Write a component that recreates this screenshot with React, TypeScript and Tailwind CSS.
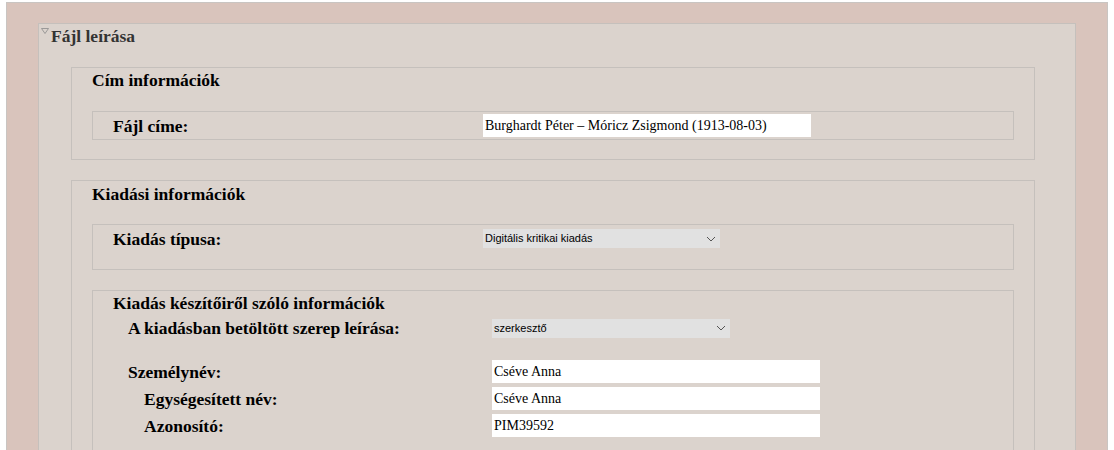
import React from "react";

const serif = "font-['Liberation_Serif',_'Times_New_Roman',_serif]";

function Label({ text, width }: { text: string; width: number }) {
  return (
    <div className="shrink-0 text-[17.5px] font-bold leading-[20px] text-black" style={{ width }}>
      {text}
    </div>
  );
}

function TextInput({ value }: { value: string }) {
  return (
    <input
      readOnly
      value={value}
      className={`${serif} h-[23px] w-[328px] bg-white px-[2px] text-[14px] text-black outline-none`}
    />
  );
}

function Select({ value, width = 238 }: { value: string; width?: number }) {
  return (
    <div
      className="flex h-[19px] items-center justify-between bg-[#e1e1e1] pl-[2px] pr-[4px] font-['Liberation_Sans',_Arial,_sans-serif] text-[11px] text-black"
      style={{ width }}
    >
      <span>{value}</span>
      <svg width="10" height="6" viewBox="0 0 10 6" fill="none" stroke="#555" strokeWidth="1">
        <path d="M1 1l4 4 4-4" />
      </svg>
    </div>
  );
}

export default function App() {
  return (
    <div className={`${serif} min-h-[450px] bg-white pt-[2px] pl-[6px] pr-[6px]`}>
      <div className="h-[448px] overflow-hidden border border-b-0 border-[#c9c5c2] bg-[#d9c4bc] pt-[20px] pl-[31px] pr-[31px]">
        {/* Fájl leírása */}
        <div className="h-[430px] border border-b-0 border-[#c5c0bc] bg-[#dbd3cd] pl-[32px] pr-[40px]">
          <div className="-ml-[32px] flex items-start pt-[3px] pl-[2px]">
            <svg width="8" height="6" viewBox="0 0 8 6" className="mt-[1px]" fill="none" stroke="#8a8a8a" strokeWidth="0.8">
              <path d="M0.5 0.5h7L4 5.5z" />
            </svg>
            <span className="ml-[2px] text-[17.5px] font-bold leading-[18px] text-[#333]">Fájl leírása</span>
          </div>

          {/* Cím információk */}
          <div className="mt-[22px] border border-[#c5c0bc] px-[20px] pb-[19px]">
            <div className="pt-[2px] text-[17.5px] font-bold leading-[20px] text-black">Cím információk</div>
            <div className="mt-[21px] flex items-center border border-[#c5c0bc] py-[2px] pl-[20px]">
              <Label text="Fájl címe:" width={370} />
              <TextInput value="Burghardt Péter – Móricz Zsigmond (1913-08-03)" />
            </div>
          </div>

          {/* Kiadási információk */}
          <div className="mt-[20px] h-[300px] border border-b-0 border-[#c5c0bc] px-[20px]">
            <div className="pt-[3px] text-[17.5px] font-bold leading-[20px] text-black">Kiadási információk</div>
            <div className="mt-[20px] flex h-[46px] items-start border border-[#c5c0bc] pt-[4px] pl-[20px]">
              <Label text="Kiadás típusa:" width={370} />
              <Select value="Digitális kritikai kiadás" width={237} />
            </div>

            {/* Kiadás készítőiről */}
            <div className="mt-[20px] h-[200px] border border-b-0 border-[#c5c0bc] pl-[20px]">
              <div className="pt-[2px] text-[17.5px] font-bold leading-[20px] text-black">
                Kiadás készítőiről szóló információk
              </div>
              <div className="mt-[5px] flex items-center pl-[15px]">
                <Label text="A kiadásban betöltött szerep leírása:" width={364} />
                <Select value="szerkesztő" />
              </div>
              <div className="mt-[22px] flex flex-col gap-[4px]">
                <div className="flex items-center pl-[15px]">
                  <Label text="Személynév:" width={364} />
                  <TextInput value="Cséve Anna" />
                </div>
                <div className="flex items-center pl-[31px]">
                  <Label text="Egységesített név:" width={348} />
                  <TextInput value="Cséve Anna" />
                </div>
                <div className="flex items-center pl-[31px]">
                  <Label text="Azonosító:" width={348} />
                  <TextInput value="PIM39592" />
                </div>
              </div>
            </div>
          </div>
        </div>
      </div>
    </div>
  );
}
